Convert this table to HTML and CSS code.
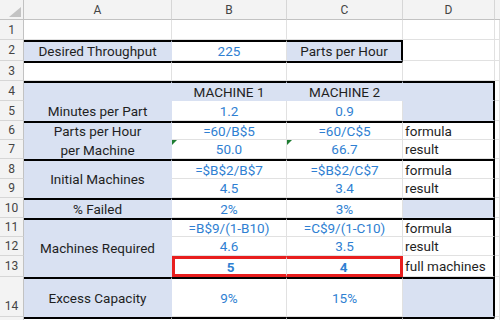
FILE: index.html
```html
<!DOCTYPE html>
<html>
<head>
<meta charset="utf-8">
<link rel="stylesheet" href="styles.css">
</head>
<body>
<div class="sheet">
  <div class="hd corner"><svg class="selall" width="12" height="10" viewBox="0 0 12 10"><polygon points="12,0 12,10 0,10" fill="#c3c3c3"/></svg></div>
  <div class="hd col">A</div>
  <div class="hd col">B</div>
  <div class="hd col">C</div>
  <div class="hd col">D</div>
  <div class="hd col last"></div>

  <div class="hd row">1</div>
  <div class="c"></div><div class="c"></div><div class="c"></div><div class="c"></div><div class="c"></div>

  <div class="hd row">2</div>
  <div class="c fill tT">Desired Throughput</div>
  <div class="c tT val">225</div>
  <div class="c fill tT tR">Parts per Hour</div>
  <div class="c"></div><div class="c"></div>

  <div class="hd row">3</div>
  <div class="c tT"></div><div class="c tT"></div><div class="c tT"></div><div class="c"></div><div class="c"></div>

  <div class="hd row">4</div>
  <div class="c fill tT"></div>
  <div class="c fill tT">MACHINE 1</div>
  <div class="c fill tT">MACHINE 2</div>
  <div class="c fill tT tR"></div>
  <div class="c"></div>

  <div class="hd row">5</div>
  <div class="c fill">Minutes per Part</div>
  <div class="c val">1.2</div>
  <div class="c val">0.9</div>
  <div class="c fill tR"></div>
  <div class="c"></div>

  <div class="hd row">6</div>
  <div class="c fill tT span2 wrap">Parts per Hour<br>per Machine</div>
  <div class="c tT val">=60/B$5</div>
  <div class="c tT val">=60/C$5</div>
  <div class="c tT tR note">formula</div>
  <div class="c"></div>

  <div class="hd row">7</div>
  <div class="c val err">50.0</div>
  <div class="c val err">66.7</div>
  <div class="c tR note">result</div>
  <div class="c"></div>

  <div class="hd row">8</div>
  <div class="c fill tT span2">Initial Machines</div>
  <div class="c tT val">=$B$2/B$7</div>
  <div class="c tT val">=$B$2/C$7</div>
  <div class="c tT tR note">formula</div>
  <div class="c"></div>

  <div class="hd row">9</div>
  <div class="c val">4.5</div>
  <div class="c val">3.4</div>
  <div class="c tR note">result</div>
  <div class="c"></div>

  <div class="hd row">10</div>
  <div class="c fill tT">% Failed</div>
  <div class="c tT val">2%</div>
  <div class="c tT val">3%</div>
  <div class="c fill tT tR"></div>
  <div class="c"></div>

  <div class="hd row">11</div>
  <div class="c fill tT span3">Machines Required</div>
  <div class="c tT val">=B$9/(1-B10)</div>
  <div class="c tT val">=C$9/(1-C10)</div>
  <div class="c tT tR note">formula</div>
  <div class="c"></div>

  <div class="hd row">12</div>
  <div class="c val">4.6</div>
  <div class="c val">3.5</div>
  <div class="c tR note">result</div>
  <div class="c"></div>

  <div class="hd row">13</div>
  <div class="c val bold redL">5</div>
  <div class="c val bold redR">4</div>
  <div class="c tR note">full machines</div>
  <div class="c"></div>

  <div class="hd row bottom">14</div>
  <div class="c fill tT">Excess Capacity</div>
  <div class="c tT val">9%</div>
  <div class="c tT val">15%</div>
  <div class="c fill tT tR"></div>
  <div class="c"></div>

  <div class="hd row"></div>
  <div class="c tT"></div><div class="c tT"></div><div class="c tT"></div><div class="c tT"></div><div class="c"></div>
</div>
</body>
</html>
```

FILE: styles.css
```css
html, body {
  margin: 0;
  padding: 0;
  background: #ffffff;
  overflow: hidden;
}

.sheet {
  display: grid;
  grid-template-columns: 24px 148px 115px 116px 92px 5px;
  grid-template-rows: 20px 20px 21px 20px 20px 20px 19px 19px 20px 19px 20px 19px 19px 21px 40px 20px;
  width: 500px;
  height: 320px;
  overflow: hidden;
  font-family: Roboto, "Liberation Sans", sans-serif;
  font-size: 13.5px;
  color: #1f1f1f;
}

.hd {
  box-sizing: border-box;
  background: #f3f3f3;
  color: #444444;
  font-size: 12px;
  display: flex;
  align-items: center;
  justify-content: center;
  border-right: 1px solid #d6d6d6;
  border-bottom: 1px solid #d6d6d6;
}

.hd.col {
  border-bottom: 1px solid #c2c2c2;
}

.hd.last {
  border-right: none;
}

.hd.row {
  border-right: 1px solid #c2c2c2;
}

.hd.bottom {
  align-items: flex-end;
  padding-bottom: 3px;
}

.corner {
  position: relative;
  border-bottom: 1px solid #c2c2c2;
  border-right: 1px solid #c2c2c2;
}

.selall {
  position: absolute;
  right: 2px;
  bottom: 2px;
}

.c {
  box-sizing: border-box;
  position: relative;
  display: flex;
  align-items: center;
  justify-content: center;
  white-space: nowrap;
  border-right: 1px solid #e1e1e1;
  border-bottom: 1px solid #e1e1e1;
}

.fill {
  background: #d9e1f2;
  border-right-color: #d9e1f2;
  border-bottom-color: #d9e1f2;
}

.val {
  color: #2f7fd2;
}

.bold {
  font-weight: 700;
}

.note {
  justify-content: flex-start;
  padding-left: 2px;
}

.wrap {
  text-align: center;
  line-height: 19px;
}

.span2 {
  grid-row: span 2;
}

.span3 {
  grid-row: span 3;
}

.tT {
  border-top: 2px solid #000000;
}

.tR {
  border-right: 2px solid #000000;
}

.fill.tR {
  border-right: 2px solid #000000;
}

.redL {
  border-left: 3px solid #e81e1e;
  border-top: 3px solid #e81e1e;
  border-bottom: 3px solid #e81e1e;
}

.redR {
  border-right: 3px solid #e81e1e;
  border-top: 3px solid #e81e1e;
  border-bottom: 3px solid #e81e1e;
}

.err::before {
  content: "";
  position: absolute;
  left: 0;
  top: 0;
  width: 0;
  height: 0;
  border-top: 5px solid #1e7d32;
  border-right: 5px solid transparent;
}
```
